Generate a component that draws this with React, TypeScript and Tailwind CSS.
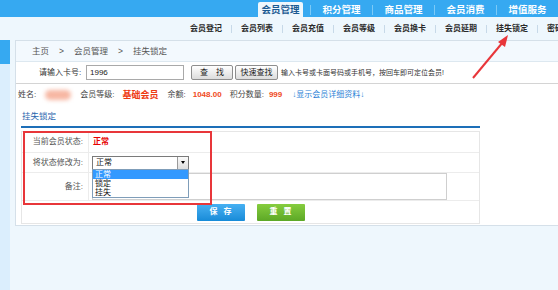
const subNav = ['会员登记', '会员列表', '会员充值', '会员等级', '会员换卡', '会员延期', '挂失锁定'];
const tabs = ['积分管理', '商品管理', '会员消费', '增值服务'];
const options = ['正常', '锁定', '挂失'];

function GrayBtn({ label, w }: { label: string; w: string }) {
  return (
    <button
      className={`${w} h-[15px] flex items-center justify-center rounded-[2px] border border-[#8e8e8e] bg-gradient-to-b from-[#ffffff] to-[#dcdcdc] text-[8px] text-[#222] leading-none`}
    >
      {label}
    </button>
  );
}

export default function App() {
  return (
    <div className="relative w-[558px] h-[290px] overflow-hidden bg-[#eef7fd] flex flex-col font-['Liberation_Sans','Noto_Sans_CJK_SC',sans-serif]">
      {/* top bar */}
      <div className="h-[17px] shrink-0 bg-[#36a9f1] flex items-start overflow-hidden">
        <div className="w-[271px] pl-[35px] -mt-[11px] text-[10px] leading-[14px] text-white/40 whitespace-nowrap">
          会员管理系统 · 连锁 · 门店
        </div>
        <div className="self-end flex items-end">
          <div className="w-[45px] h-[15px] rounded-t-[2px] bg-[#eef7fd] flex items-center justify-center text-[9.5px] font-bold text-[#1b5a92] leading-none">
            会员管理
          </div>
          <div className="w-[7px]" />
          {tabs.map((t) => (
            <div key={t} className="flex items-center h-[15px]">
              <div className="w-px h-[10px] bg-[#7ccaf7]" />
              <div className="w-[61px] text-center text-[9.5px] font-bold text-white leading-none whitespace-nowrap">{t}</div>
            </div>
          ))}
        </div>
      </div>

      {/* sub nav */}
      <div className="h-[23px] shrink-0 flex items-center pl-[190px] whitespace-nowrap">
        {subNav.map((s) => (
          <div key={s} className="flex items-center">
            <span className="w-[32px] text-[8px] font-bold text-[#2a2a2a] leading-none">{s}</span>
            <span className="w-px h-[8px] bg-[#c7d9e8] mx-[9px]" />
          </div>
        ))}
        <span className="text-[8px] font-bold text-[#2a2a2a] leading-none">密码</span>
      </div>

      {/* body */}
      <div className="flex flex-1 min-h-0">
        <div className="w-[10px] shrink-0 bg-[#dbeefd] flex flex-col">
          <div className="h-[24px] bg-[#36a9f1]" />
        </div>
        <div className="ml-[5px] w-[548px] h-[186px] bg-white border border-r-0 border-[#d5e0e9] flex flex-col">
          {/* breadcrumb */}
          <div className="h-[21px] shrink-0 bg-[#f3f9fe] border-b border-[#dde8f0] flex items-center gap-[10px] pl-[16px] text-[8.5px] text-[#555] leading-none">
            <span>主页</span>
            <span>&gt;</span>
            <span>会员管理</span>
            <span>&gt;</span>
            <span>挂失锁定</span>
          </div>

          {/* search */}
          <div className="h-[22px] shrink-0 border-b border-[#d4d4d4] flex items-center pl-[23px] text-[8px] text-[#333] leading-none whitespace-nowrap">
            <span className="w-[38px]">请输入卡号:</span>
            <div className="ml-[9px] w-[98px] h-[15px] border border-[#a9a9a9] flex items-center pl-[3px] text-[8px] text-[#222]">1996</div>
            <div className="ml-[7px]">
              <GrayBtn label="查　找" w="w-[42px]" />
            </div>
            <div className="ml-[2px]">
              <GrayBtn label="快速查找" w="w-[43px]" />
            </div>
            <span className="ml-[3px] text-[7px] text-[#333]">输入卡号或卡面号码或手机号，按回车即可定位会员!</span>
          </div>

          {/* member info */}
          <div className="h-[22px] shrink-0 flex items-center pl-[2px] text-[8px] text-[#444] leading-none whitespace-nowrap">
            <span>姓名:</span>
            <span className="ml-[9px] w-[26px] h-[10px] rounded-full bg-[#f7b7a3] blur-[2px]" />
            <span className="ml-[9px]">会员等级:</span>
            <span className="ml-[8px] text-[9px] font-bold text-[#ee3a12]">基础会员</span>
            <span className="ml-[9px]">余额:</span>
            <span className="ml-[7px] font-bold text-[#f04a1c]">1048.00</span>
            <span className="ml-[8px]">积分数量:</span>
            <span className="ml-[5px] font-bold text-[#f04a1c]">999</span>
            <span className="ml-[10px] text-[#2b7fd6]">↓显示会员详细资料↓</span>
          </div>

          {/* section */}
          <div className="px-[5px] w-[469px] flex flex-col">
            <div className="h-[20px] flex items-center pl-[1px] text-[8.5px] text-[#1f64ad] leading-none">挂失锁定</div>
            <div className="h-[2px] bg-[#1d6fb8]" />
            <div className="mt-[3px] border border-[#e6e6e6] text-[8px] leading-none">
              <div className="flex h-[21px] border-b border-[#ececec]">
                <div className="w-[67px] border-r border-[#ececec] flex items-center justify-end pr-[5px] text-[#555]">当前会员状态:</div>
                <div className="flex items-center pl-[4px] font-bold text-[#e60000]">正常</div>
              </div>
              <div className="flex h-[20px] border-b border-[#ececec]">
                <div className="w-[67px] border-r border-[#ececec] flex items-center justify-end pr-[5px] text-[#555]">将状态修改为:</div>
                <div className="relative flex items-center pl-[3px]">
                  <div className="w-[97px] h-[14px] border border-[#7a7a7a] flex items-center bg-white">
                    <span className="pl-[3px] flex-1 text-[#111]">正常</span>
                    <span className="w-[11px] h-[12px] border-l border-[#9a9a9a] bg-gradient-to-b from-[#fafafa] to-[#dedede] flex items-center justify-center">
                      <span className="w-0 h-0 border-l-[2.5px] border-r-[2.5px] border-t-[3px] border-l-transparent border-r-transparent border-t-black" />
                    </span>
                  </div>
                  {/* open option list */}
                  <ul className="absolute left-[3px] top-[16px] w-[97px] bg-white border border-[#7f9db9] z-10 py-0">
                    {options.map((o, i) => (
                      <li
                        key={o}
                        className={`block h-[9px] pl-[2px] text-[8px] leading-[9px] ${i === 0 ? 'bg-[#3399ff] text-white' : 'text-[#111]'}`}
                      >
                        {o}
                      </li>
                    ))}
                  </ul>
                </div>
              </div>
              <div className="flex h-[28px] border-b border-[#ececec]">
                <div className="w-[67px] border-r border-[#ececec] flex items-center justify-end pr-[5px] text-[#555]">备注:</div>
                <div className="flex items-start pl-[3px]">
                  <div className="w-[355px] h-[27px] border border-[#cfcfcf]" />
                </div>
              </div>
              <div className="flex h-[22px] items-center justify-center gap-[12px]">
                <button className="w-[48px] h-[17px] rounded-[1px] bg-gradient-to-b from-[#45b0f2] to-[#168bd8] text-white text-[8px] font-bold tracking-[6px] pl-[6px]">保存</button>
                <button className="w-[48px] h-[17px] rounded-[1px] bg-gradient-to-b from-[#86cd3e] to-[#5ca826] text-white text-[8px] font-bold tracking-[6px] pl-[6px]">重置</button>
              </div>
            </div>
          </div>
        </div>
      </div>

      {/* annotation: red box */}
      <div className="absolute left-[23px] top-[131px] w-[189px] h-[74px] border-2 border-[#e8363a] pointer-events-none z-20" />
      {/* annotation: arrow */}
      <svg className="absolute left-0 top-0 z-20 pointer-events-none" width="558" height="290">
        <line x1="473" y1="78" x2="503" y2="42" stroke="#e8363a" strokeWidth="2" />
        <polygon points="508,35 498,42 505,47" fill="#e8363a" />
      </svg>
    </div>
  );
}
